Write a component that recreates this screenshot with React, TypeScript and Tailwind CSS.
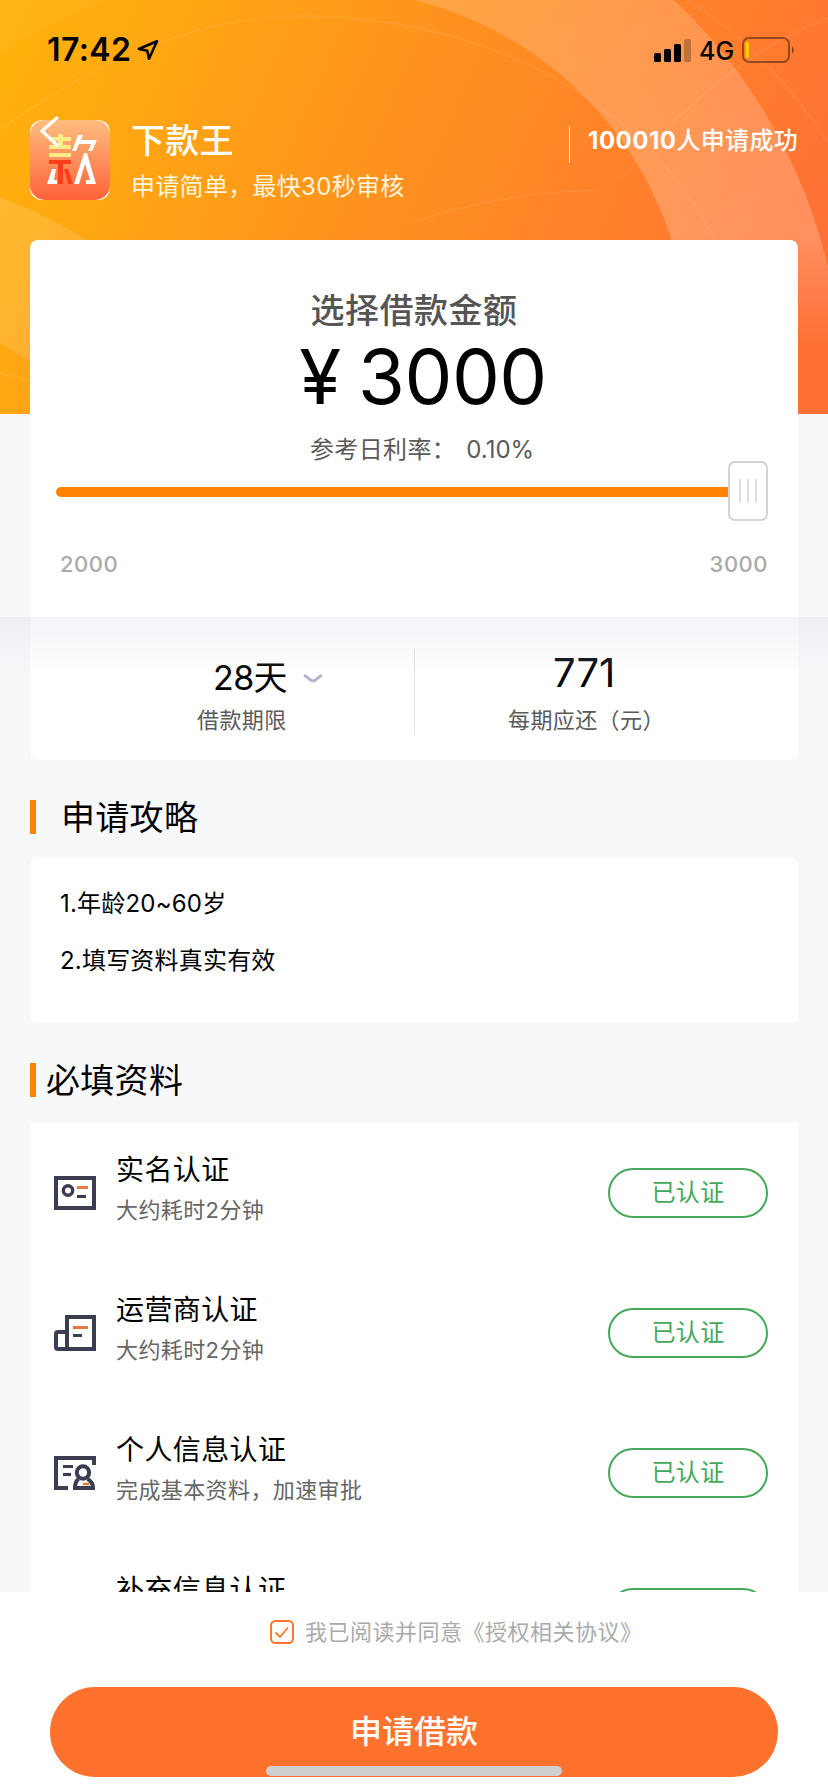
import type { ReactNode } from "react";

const steps = [
  { title: "实名认证", desc: "大约耗时2分钟", icon: <IdCardIcon /> },
  { title: "运营商认证", desc: "大约耗时2分钟", icon: <CarrierIcon /> },
  { title: "个人信息认证", desc: "完成基本资料，加速审批", icon: <ProfileIcon /> },
  { title: "补充信息认证", desc: "", icon: <ProfileIcon /> },
];

function IdCardIcon() {
  return (
    <svg width="42" height="36" viewBox="0 0 42 36" fill="none">
      <rect x="2" y="3" width="38" height="30" stroke="#3b3d50" strokeWidth="4" />
      <circle cx="14" cy="15.5" r="4.7" stroke="#3b3d50" strokeWidth="3.4" />
      <path d="M23 12.5h11" stroke="#e5793e" strokeWidth="3" />
      <path d="M23 21.5h9" stroke="#3b3d50" strokeWidth="3" />
    </svg>
  );
}

function CarrierIcon() {
  return (
    <svg width="42" height="36" viewBox="0 0 42 36" fill="none">
      <path d="M13 2h27v32H13z" stroke="#3b3d50" strokeWidth="4" />
      <path d="M13 17H4q-2 0-2 2v13q0 2 2 2h9" stroke="#3b3d50" strokeWidth="4" />
      <path d="M19 12.5h15" stroke="#e5793e" strokeWidth="3" />
      <path d="M19 20.5h9" stroke="#3b3d50" strokeWidth="3" />
    </svg>
  );
}

function ProfileIcon() {
  return (
    <svg width="42" height="36" viewBox="0 0 42 36" fill="none">
      <path d="M40 10V3H2v30h12" stroke="#3b3d50" strokeWidth="4" />
      <path d="M9 11.500h10M9 19.500h8" stroke="#3b3d50" strokeWidth="3" />
      <circle cx="29" cy="17.500" r="6.200" stroke="#3b3d50" strokeWidth="4" />
      <path d="M24.500 24Q21 27 21 33H39Q39 27 33.500 24" stroke="#3b3d50" strokeWidth="4" />
      <path d="M29 29h6" stroke="#e5793e" strokeWidth="2.600" />
    </svg>
  );
}

function HeaderArt() {
  return (
    <svg className="absolute inset-0" width="828" height="414" viewBox="0 0 828 414" fill="none">
      <defs>
        <linearGradient id="sky" gradientUnits="userSpaceOnUse" x1="0" y1="60" x2="760" y2="400">
          <stop offset="0" stopColor="#ffb20b" />
          <stop offset="0.5" stopColor="#ff9020" />
          <stop offset="1" stopColor="#ff7035" />
        </linearGradient>
        <linearGradient id="ring" gradientUnits="userSpaceOnUse" x1="740" y1="0" x2="740" y2="345">
          <stop offset="0" stopColor="#fff" stopOpacity="0.17" />
          <stop offset="0.68" stopColor="#fff" stopOpacity="0.22" />
          <stop offset="1" stopColor="#fff" stopOpacity="0" />
        </linearGradient>
      </defs>
      <rect width="828" height="414" fill="url(#sky)" />
      <path d="M414 0A361 361 0 0 1 689 350L828 350V267A538 538 0 0 0 674 0Z" fill="url(#ring)" />
      <path d="M0 197Q46 214 90 242V395Q40 368 0 343Z" fill="#fff" fillOpacity="0.13" />
      <path d="M0 0H107Q40 24 0 56Z" fill="#fff" fillOpacity="0.04" />
      <g stroke="#fff" strokeOpacity="0.07" strokeWidth="2">
        <path d="M0 130C130 35 230 16 310 16C500 20 650 110 716 242" />
        <path d="M414 222Q500 192 600 190M688 0Q775 58 828 143M620 180Q720 60 828 18M0 373L32 381" />
      </g>
    </svg>
  );
}

function StatusBar() {
  return (
    <div className="flex h-[100px] items-center justify-between pl-[47px] pr-[32px] text-black">
      <div className="flex items-center gap-[4px]">
        <span className="w-[85px] whitespace-nowrap text-[32px] font-semibold leading-none tracking-[0.4px]">17:42</span>
        <svg width="24" height="24" viewBox="0 0 24 24" fill="none" stroke="#000" strokeWidth="2.600" strokeLinejoin="round">
          <path d="M21 3.300L2.800 11L11.300 12.700L13 20.800Z" />
        </svg>
      </div>
      <div className="flex items-center">
        <svg width="38" height="24" viewBox="0 0 38 24">
          <rect x="0" y="15" width="7" height="9" rx="1.500" />
          <rect x="10" y="11" width="7" height="13" rx="1.500" />
          <rect x="20" y="6" width="7" height="18" rx="1.500" />
          <rect x="30" y="1" width="7" height="23" rx="1.500" fillOpacity="0.25" />
        </svg>
        <span className="ml-[7px] mt-[2px] w-[36px] text-[25px] font-medium leading-none">4G</span>
        <svg className="ml-[7px]" width="54" height="26" viewBox="0 0 54 26" fill="none">
          <rect x="1" y="1" width="46" height="24" rx="6" stroke="#000" strokeOpacity="0.4" strokeWidth="2" />
          <rect x="3.500" y="5" width="3.500" height="16" rx="1" fill="#ffcc00" />
          <path d="M50 9q3.500 4 0 8z" fill="#000" fillOpacity="0.45" />
        </svg>
      </div>
    </div>
  );
}

function AppLogo() {
  return (
    <div className="relative size-20 shrink-0">
      <svg width="80" height="80" viewBox="0 0 80 80" fill="none">
        <defs>
          <linearGradient id="logo" x1="0" y1="0" x2="0" y2="1">
            <stop offset="0" stopColor="#ffbd80" />
            <stop offset="1" stopColor="#ff6238" />
          </linearGradient>
        </defs>
        <rect width="80" height="80" rx="12" fill="#fff" />
        <rect width="80" height="80" rx="15" fill="url(#logo)" />
        <path d="M19 17h22v4H19zM19 25h22v4H19zM19 33h22v4H19zM28 14h5v14h-5z" fill="#fbee88" />
        <path d="M19 40h22v4H19zM28 44h5v20h-5zM34 49h4l5 15h-5z" fill="#fb3d1c" />
        <path d="M22 49h4l-2 11h3v4H17zM48 15h5l-2 5h16l-5 11h-4l3-7H49l-3 7h-4z" fill="#fff" />
        <path d="M54 33h3l9 31H56v-4h4l-5-16-6 20h-5z" fill="#fff" />
      </svg>
      <svg className="absolute left-[10px] top-[-5px]" width="22" height="34" viewBox="0 0 22 34" fill="none">
        <path d="M18 2L2 16L18 31" stroke="#fff" strokeWidth="3.200" />
      </svg>
    </div>
  );
}

function SectionTitle({ children, className }: { children: ReactNode; className: string }) {
  return (
    <div className="flex h-[34px] items-center">
      <div className="h-[34px] w-[6px] bg-[#ff8400]" />
      <h2 className={`pt-[2px] text-[34px] leading-none tracking-[0.3px] text-black ${className}`}>{children}</h2>
    </div>
  );
}

export default function App() {
  return (
    <div className="relative flex h-[1792px] w-[828px] flex-col overflow-hidden bg-[#f7f8fa] font-[Inter,'Noto_Sans_CJK_SC',sans-serif]">
      <div className="absolute inset-x-0 top-0 h-[414px]">
        <HeaderArt />
      </div>

      <div className="relative h-[240px] shrink-0">
        <StatusBar />
        <header className="flex pl-[30px] pr-[30px] pt-5 text-white">
          <AppLogo />
          <div className="ml-[21px] flex flex-col">
            <h1 className="mt-[4px] text-[34px] font-medium leading-[34px] tracking-[0.2px]">下款王</h1>
            <p className="mt-[17px] text-[24px] leading-6 tracking-[0.3px] text-[#fff6dc]">申请简单，最快30秒审核</p>
          </div>
          <div className="ml-auto mt-[6px] flex h-[37px] items-start border-l border-white/90 pl-[18px]">
            <span className="mt-[3px] text-[24px] font-medium leading-6 tracking-[0.3px]">
              <b className="font-bold tracking-[0.5px]">100010</b>人申请成功
            </span>
          </div>
        </header>
      </div>

      {/* amount card */}
      <div className="relative mx-[30px] h-[377px] shrink-0 rounded-t-[8px] bg-white">
        <p className="pt-[54px] text-center text-[34px] font-medium leading-[34px] tracking-[0.5px] text-[#555]">选择借款金额</p>
        <div className="mt-[10px] flex h-[76px] items-center justify-center gap-[17px] pl-[18px] text-[76px] leading-none text-black">
          <span>¥</span>
          <span className="tracking-[-0.5px]">3000</span>
        </div>
        <p className="mt-[24px] flex justify-center pl-[16px] text-[24px] leading-6 tracking-[0.4px] text-[#5a5a5a]">
          <span>参考日利率：</span>
          <span className="ml-[10px] tracking-[0px]">0.10%</span>
        </p>
        <div className="-mt-px ml-[26px] mr-[30px] flex h-[60px] items-center">
          <div className="mt-[2px] h-[10px] flex-1 rounded-l-[5px] bg-[#ff8200]" />
          <div className="flex h-[60px] w-[40px] items-center justify-center gap-[6px] rounded-[7px] border-2 border-[#d2d4da] bg-white">
            <i className="h-6 w-[2px] bg-[#dcdee3]" />
            <i className="h-6 w-[2px] bg-[#dcdee3]" />
            <i className="h-6 w-[2px] bg-[#dcdee3]" />
          </div>
        </div>
        <div className="mt-[31px] flex justify-between px-[30px] text-[22px] font-medium leading-6 tracking-[0.5px] text-[#aaa]">
          <span>2000</span>
          <span>3000</span>
        </div>
      </div>

      {/* term / instalment */}
      <div className="relative h-[143px] shrink-0 px-[30px]">
        <div className="flex h-full rounded-b-[8px] bg-white pt-8">
          <div className="flex w-1/2 flex-col pl-[167px]">
            <div className="mt-[12px] flex items-center pl-[16px] text-[34px] leading-[34px] tracking-[-0.6px] text-black">
              28天
              <svg className="ml-[16px]" width="20" height="9" viewBox="0 0 20 9" fill="none">
                <path d="M1 1.200C5 3 7 7 10 7S15 3 19 1.200" stroke="#b4b3cb" strokeWidth="2.800" />
              </svg>
            </div>
            <p className="mt-[14px] text-[22px] leading-[22px] tracking-[0.4px] text-[#5a5a5a]">借款期限</p>
          </div>
          <div className="h-[85px] w-px bg-[#e3e4e9]" />
          <div className="flex flex-col pl-[93px]">
            <p className="mt-[5px] pl-[45px] text-[40px] leading-[38px] text-black">771</p>
            <p className="mt-[17px] text-[22px] leading-[22px] tracking-[0.4px] text-[#5a5a5a]">每期应还（元）</p>
          </div>
        </div>
        <div className="pointer-events-none absolute inset-x-0 top-0 h-[60px] bg-linear-to-b from-[#e0e2ee]/40 to-[#e0e2ee]/0" />
      </div>

      <div className="mt-10 shrink-0 px-[30px]">
        <SectionTitle className="ml-[25px]">申请攻略</SectionTitle>
        <div className="mt-6 flex h-[165px] flex-col gap-[33px] rounded-[8px] bg-white pl-[30px] pt-[34px] text-[24px] leading-6 tracking-[0.2px] text-black">
          <p>1.年龄20~60岁</p>
          <p>2.填写资料真实有效</p>
        </div>
      </div>

      <div className="mt-10 shrink-0 px-[30px]">
        <SectionTitle className="ml-[10px]">必填资料</SectionTitle>
        <ul className="mt-[26px] h-[469px] overflow-hidden bg-white">
          {steps.map((step) => (
            <li key={step.title} className="flex h-[140px] items-center pl-6 pr-[30px]">
              {step.icon}
              <div className="mb-[10px] ml-[20px] flex-1">
                <p className="text-[28px] leading-7 tracking-[0.4px] text-black">{step.title}</p>
                <p className="mt-[15px] h-[22px] text-[22px] leading-[22px] tracking-[0.4px] text-[#666]">{step.desc}</p>
              </div>
              <span className="flex h-[50px] w-[160px] items-center justify-center rounded-full border-2 border-[#45a85a] text-[24px] leading-none tracking-[0.3px] text-[#45a85a]">
                已认证
              </span>
            </li>
          ))}
        </ul>
      </div>

      <footer className="absolute inset-x-0 bottom-0 h-[200px] bg-white">
        <div className="flex items-center pl-[270px] pt-7">
          <svg width="24" height="24" viewBox="0 0 24 24" fill="none" stroke="#ff752c">
            <rect x="1" y="1" width="22" height="22" rx="4.500" strokeWidth="2" />
            <path d="M5.500 12.500L10 17L18 7.500" strokeWidth="1.800" />
          </svg>
          <span className="ml-[11px] text-[22px] leading-6 tracking-[0.5px] text-[#aaa]">我已阅读并同意《授权相关协议》</span>
        </div>
        <button className="mx-[50px] mt-[43px] flex h-[90px] w-[728px] items-center justify-center rounded-full bg-[#ff722d] text-[32px] font-medium leading-none text-white">
          申请借款
        </button>
        <div className="absolute bottom-[16px] left-[266px] h-[10px] w-[296px] rounded-full bg-[#cfcfcf]" />
      </footer>
    </div>
  );
}
